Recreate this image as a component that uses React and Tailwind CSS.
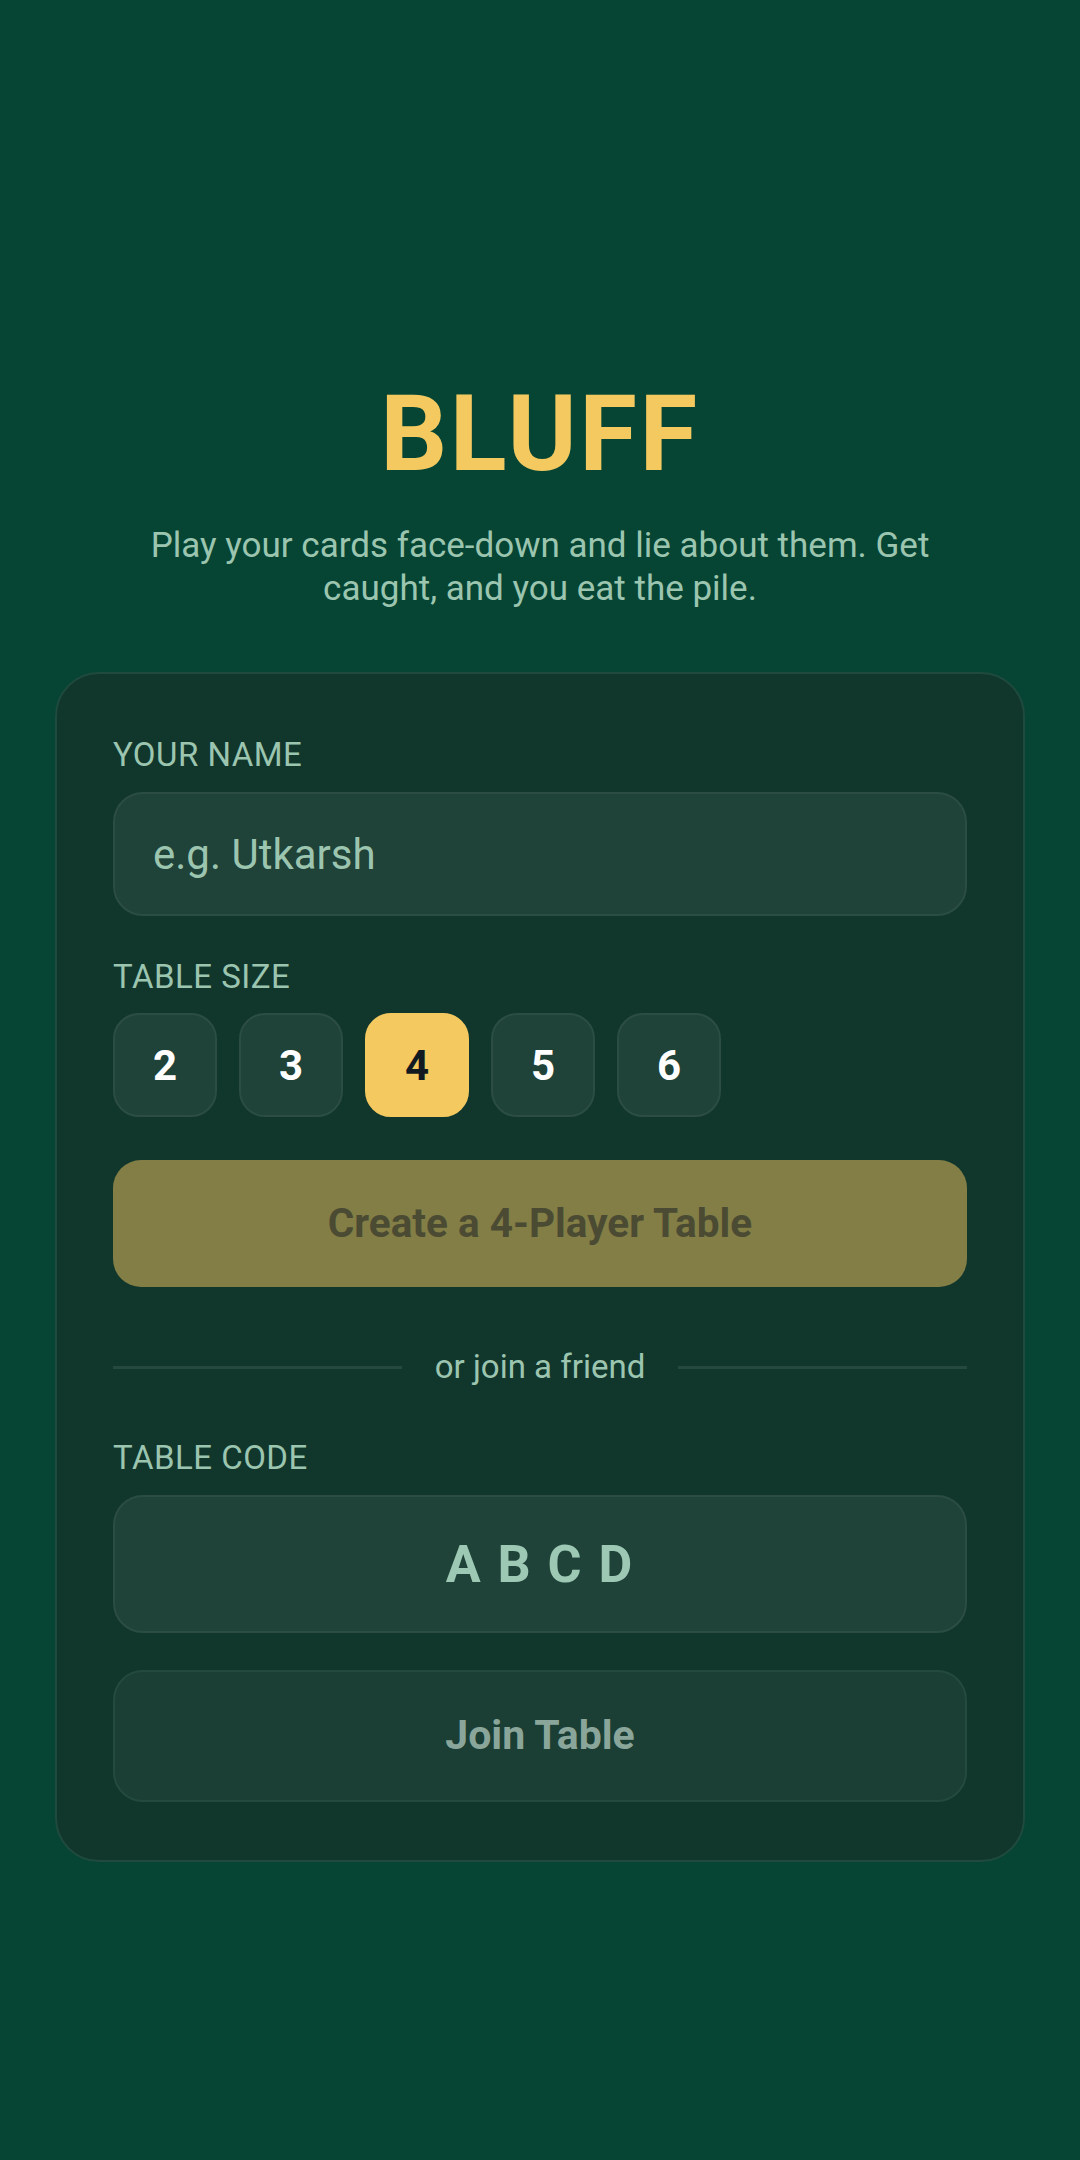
import React, { useState } from "react";

const SIZES = [2, 3, 4, 5, 6];

const Label = ({ children }) => (
  <p className="text-[33px] leading-[48px] tracking-[0.015em] text-[#9cc5b0] uppercase">
    {children}
  </p>
);

const App = () => {
  const [name, setName] = useState("");
  const [size, setSize] = useState(4);
  const [code, setCode] = useState("");

  return (
    <div
      className="min-h-screen bg-[#064534] flex flex-col items-center px-[55px] pt-[382px]"
      style={{ fontFamily: "Roboto, 'Noto Sans', sans-serif" }}
    >
      {/* TITLE */}
      <h1 className="text-[105px] leading-none font-bold text-[#f4c95f] tracking-[0.025em]">
        BLUFF
      </h1>
      <p className="mt-[37px] max-w-[800px] text-center text-[35px] leading-[43px] text-[#9cc5b0]">
        Play your cards face-down and lie about them. Get caught, and you eat
        the pile.
      </p>

      {/* CARD */}
      <div className="mt-[62px] w-full rounded-[44px] border-2 border-[#1f4a3d] bg-[#11372d] px-[56px] pt-[57px] pb-[58px]">
        <Label>Your name</Label>
        <input
          value={name}
          onChange={(e) => setName(e.target.value)}
          placeholder="e.g. Utkarsh"
          className="mt-[13px] block w-full h-[124px] rounded-[30px] border-2 border-[#2b4d43] bg-[#1f4239] px-[38px] text-[42px] text-white placeholder:text-[#9cc5b0] outline-none"
        />

        <div className="mt-[37px]">
          <Label>Table size</Label>
        </div>
        <div className="mt-[12px] flex gap-[22px]">
          {SIZES.map((n) => (
            <button
              key={n}
              onClick={() => setSize(n)}
              className={
                n === size
                  ? "w-[104px] h-[104px] rounded-[26px] border-2 border-[#f4c95f] bg-[#f4c95f] text-[42px] font-bold text-[#121a21]"
                  : "w-[104px] h-[104px] rounded-[26px] border-2 border-[#2b4d43] bg-[#1f4239] text-[42px] font-bold text-white"
              }
            >
              {n}
            </button>
          ))}
        </div>

        <button className="mt-[43px] w-full h-[127px] rounded-[28px] bg-[#827e46] text-[40.5px] font-bold text-[#4b4b33]">
          Create a {size}-Player Table
        </button>

        {/* DIVIDER */}
        <div className="mt-[56px] flex items-center gap-[33px]">
          <div className="flex-1 h-[3px] bg-[#25493e]" />
          <span className="text-[33px] leading-[48px] text-[#9cc5b0]">
            or join a friend
          </span>
          <div className="flex-1 h-[3px] bg-[#25493e]" />
        </div>

        <div className="mt-[43px]">
          <Label>Table code</Label>
        </div>
        <input
          value={code}
          onChange={(e) => setCode(e.target.value.toUpperCase())}
          placeholder="A B C D"
          className="mt-[13px] block w-full h-[138px] rounded-[30px] border-2 border-[#2b4d43] bg-[#1f4239] px-[38px] text-center text-[52px] font-bold tracking-[2px] text-white placeholder:text-[#9dc8b3] outline-none"
        />

        <button className="mt-[37px] w-full h-[132px] rounded-[30px] border-2 border-[#244a3f] bg-[#1b3e35] text-[41px] font-bold text-[#8aa69b]">
          Join Table
        </button>
      </div>
    </div>
  );
};

export default App;
